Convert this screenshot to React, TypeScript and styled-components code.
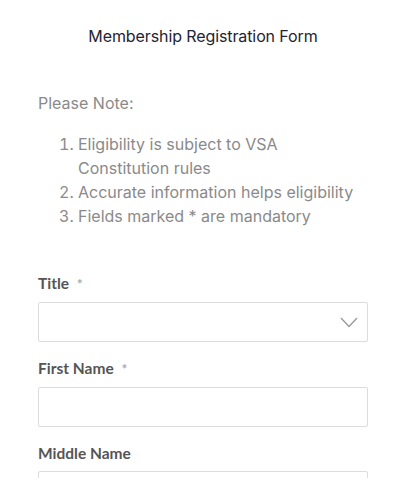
import React from "react";
import styled, { createGlobalStyle } from "styled-components";

const GlobalStyle = createGlobalStyle`
  html, body {
    margin: 0;
    padding: 0;
    background: #ffffff;
  }
  * {
    box-sizing: border-box;
  }
`;

type Field = {
  label: string;
  required?: boolean;
  kind: "select" | "text";
};

const notes = [
  "Eligibility is subject to VSA Constitution rules",
  "Accurate information helps eligibility",
  "Fields marked * are mandatory",
];

const fields: Field[] = [
  { label: "Title", required: true, kind: "select" },
  { label: "First Name", required: true, kind: "text" },
  { label: "Middle Name", kind: "text" },
];

const Chevron = () => (
  <svg width="18" height="11" viewBox="0 0 18 11" fill="none">
    <path d="M1 1l8 8.5L17 1" stroke="#9a9a9a" strokeWidth="1.4" />
  </svg>
);

export default function App() {
  return (
    <Page>
      <GlobalStyle />
      <Heading>Membership Registration Form</Heading>

      <NoteBlock>
        <NoteTitle>Please Note:</NoteTitle>
        <NoteList>
          {notes.map((note) => (
            <li key={note}>{note}</li>
          ))}
        </NoteList>
      </NoteBlock>

      <Form>
        {fields.map((field) => (
          <FieldGroup key={field.label}>
            <Label>
              {field.label}
              {field.required ? <Star>*</Star> : null}
            </Label>
            {field.kind === "select" ? (
              <SelectBox>
                <Chevron />
              </SelectBox>
            ) : (
              <Input type="text" />
            )}
          </FieldGroup>
        ))}
      </Form>
    </Page>
  );
}

const Page = styled.div`
  width: 404px;
  height: 478px;
  overflow: hidden;
  padding: 0 36px 0 38px;
  font-family: Inter, "Noto Sans", sans-serif;
`;

const Heading = styled.h1`
  margin: 26px 0 0;
  text-align: center;
  font-size: 16px;
  font-weight: 400;
  line-height: 20px;
  color: #1f2430;
  letter-spacing: -0.1px;
`;

const NoteBlock = styled.div`
  margin-top: 45px;
  color: #8a8a8a;
  font-size: 16px;
`;

const NoteTitle = styled.div`
  line-height: 24px;
`;

const NoteList = styled.ol`
  margin: 17px 0 0;
  padding-left: 40px;
  line-height: 24px;

  & li {
    padding-left: 0;
  }
`;

const Form = styled.div`
  margin-top: 46px;
  display: flex;
  flex-direction: column;
  gap: 17px;
`;

const FieldGroup = styled.div`
  display: flex;
  flex-direction: column;
  gap: 9px;
`;

const Label = styled.label`
  font-family: Lato, "Liberation Sans", sans-serif;
  font-size: 15.5px;
  font-weight: 700;
  color: #555555;
  line-height: 18px;
`;

const Star = styled.span`
  margin-left: 8px;
  color: #a8a8a8;
  font-size: 13px;
`;

const SelectBox = styled.div`
  height: 40px;
  border: 1px solid #dcdcdc;
  border-radius: 2px;
  display: flex;
  align-items: center;
  justify-content: flex-end;
  padding-right: 9px;
`;

const Input = styled.input`
  height: 40px;
  border: 1px solid #dcdcdc;
  border-radius: 2px;
  outline: none;
  padding: 0 10px;
  font-size: 15px;
`;
